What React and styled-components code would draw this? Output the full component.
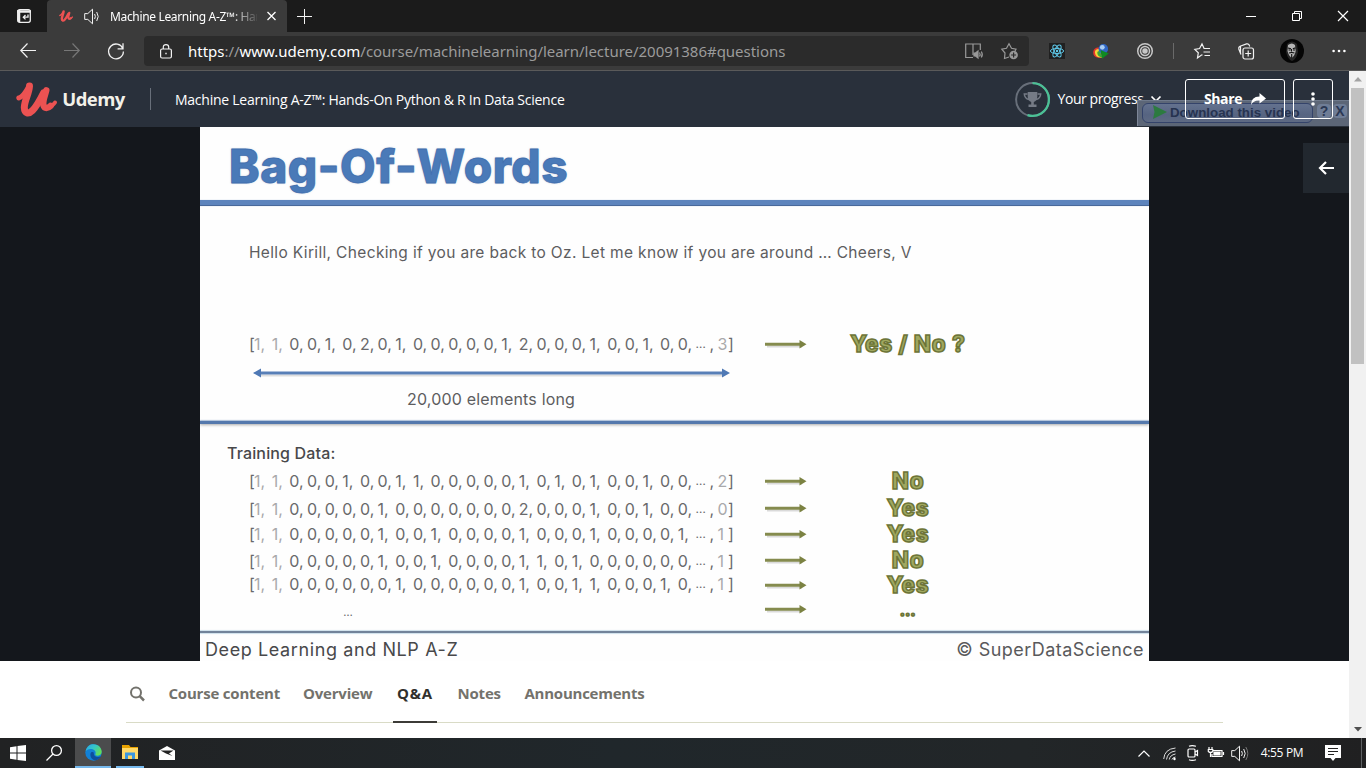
import React from "react";
import styled, { createGlobalStyle } from "styled-components";

const UI = `"Open Sans", "Noto Sans", sans-serif`;
const NOTO = `"Noto Sans", "Open Sans", sans-serif`;
const SLIDE = `Inter, Lato, sans-serif`;

const Global = createGlobalStyle`
  * { box-sizing: border-box; }
  html, body { margin: 0; padding: 0; background: #fff; overflow: hidden; }
  svg { display: block; flex: none; overflow: visible; }
`;

const Screen = styled.div`
  width: 1366px;
  height: 768px;
  display: flex;
  flex-direction: column;
  overflow: hidden;
  font-family: ${UI};
`;

const Cell = styled.div`
  width: ${(p) => p.$w}px;
  height: 100%;
  flex: none;
  display: flex;
  align-items: center;
  justify-content: center;
`;

const Label = styled.span`
  white-space: nowrap;
  flex: none;
  font-size: ${(p) => p.$size}px;
  font-weight: ${(p) => p.$weight || 400};
  letter-spacing: ${(p) => p.$track || 0}px;
  margin-bottom: ${(p) => p.$lift || 0}px;
  color: ${(p) => p.$color || "#fff"};
`;

/* ---------- browser chrome ---------- */

const TabStrip = styled.div`
  height: 32px;
  flex: none;
  display: flex;
  background: #1b1b1b;
`;

const Tab = styled.div`
  width: 240px;
  height: 32px;
  display: flex;
  align-items: center;
  padding-left: 12px;
  background: #3b3b3b;
  border-radius: 4px 4px 0 0;
`;

const TabTitle = styled.div`
  width: 147px;
  margin-left: 9px;
  overflow: hidden;
  white-space: nowrap;
  font-family: ${NOTO};
  font-size: 12px;
  letter-spacing: -0.34px;
  color: #fff;
  mask-image: linear-gradient(90deg, #000 120px, transparent 150px);
`;

const Spacer = styled.div`
  flex: 1;
`;

const Toolbar = styled.div`
  height: 39px;
  flex: none;
  display: flex;
  padding-left: 6px;
  background: #3b3b3b;
  border-bottom: 1px solid #5a5a5a;
`;

const AddressBar = styled.div`
  width: 885px;
  height: 30px;
  margin: 4px 6px 0 6px;
  display: flex;
  align-items: center;
  border-radius: 4px;
  background: #2b2b2b;
`;

const Url = styled.div`
  font-family: ${NOTO};
  font-size: 15px;
  letter-spacing: -0.025px;
  white-space: nowrap;
  color: #9b9b9b;
  b { font-weight: 400; color: #fff; }
`;

const ToolDivider = styled.div`
  width: 1px;
  height: 16px;
  background: #6a6a6a;
`;

/* ---------- page ---------- */

const Page = styled.div`
  height: 667px;
  flex: none;
  display: flex;
`;

const Content = styled.div`
  width: 1349px;
  flex: none;
  position: relative;
  background: #fff;
`;

const Header = styled.div`
  height: 56px;
  display: flex;
  align-items: center;
  padding-left: 16px;
  background: #29303b;
`;

const HeaderDivider = styled.div`
  width: 1px;
  height: 22px;
  margin: 0 24px;
  background: #686f7a;
`;

const OutlineButton = styled.div`
  width: ${(p) => p.$w}px;
  height: 40px;
  position: relative;
  z-index: 1;
  margin-left: ${(p) => p.$gap}px;
  display: flex;
  align-items: center;
  justify-content: center;
  gap: 9px;
  border: 1px solid #fff;
  border-radius: 3px;
`;

const DownloadBar = styled.div`
  position: absolute;
  left: 1137px;
  top: 29px;
  width: 212px;
  height: 26px;
  display: flex;
  align-items: flex-start;
  padding: 2px 0 0 4px;
  border-left: 1px solid #7d8698;
  border-top: 1px solid #6f7a8c;
  background: #5c6677;
`;

const DownloadButton = styled.div`
  width: 171px;
  height: 20px;
  display: flex;
  align-items: center;
  padding: 0 0 2px 10px;
  gap: 3px;
  border: 1px solid #34436a;
  border-radius: 6px;
  background: linear-gradient(#64728f, #566481 60%, #5e6a83);
  font: 700 13.3px "Liberation Sans", sans-serif;
  letter-spacing: 0.02px;
  color: #263350;
  white-space: nowrap;
`;

const MiniButton = styled.div`
  width: 14px;
  height: 14px;
  margin: 1px 0 0 ${(p) => p.$gap}px;
  display: flex;
  align-items: center;
  justify-content: center;
  border-radius: 4px;
  background: #6f7d96;
  font: 700 14px "Liberation Sans", sans-serif;
  color: #2b3854;
`;

const Stage = styled.div`
  height: 534px;
  display: flex;
  padding-left: 200px;
  background: #14171c;
`;

const Collapse = styled.div`
  width: 46px;
  height: 50px;
  margin: 16px 0 0 154px;
  display: flex;
  align-items: center;
  justify-content: center;
  background: #22282f;
`;

const Slide = styled.div`
  width: 949px;
  height: 534px;
  flex: none;
  display: flex;
  flex-direction: column;
  background: #fefefe;
  font-family: ${SLIDE};
  overflow: hidden;
`;

const SlideTitle = styled.div`
  height: 73px;
  padding-left: 29px;
  line-height: 78px;
  font-size: 46px;
  font-weight: 800;
  letter-spacing: 0.6px;
  white-space: nowrap;
  color: #4a7ab8;
  -webkit-text-stroke: 0.8px #426fae;
  text-shadow: 0 0 2px rgba(110, 135, 180, 0.7);
`;

const Rule = styled.div`
  height: ${(p) => p.$h}px;
  flex: none;
  background: ${(p) => p.$color};
  box-shadow: ${(p) => p.$shadow || "none"};
`;

const SlideSection = styled.div`
  height: ${(p) => p.$h}px;
  flex: none;
`;

const SlideText = styled.div`
  height: 22px;
  line-height: 22px;
  padding-left: ${(p) => p.$x}px;
  margin-top: ${(p) => p.$top || 0}px;
  font-size: ${(p) => p.$size}px;
  font-weight: ${(p) => p.$weight || 400};
  letter-spacing: ${(p) => p.$track}px;
  white-space: nowrap;
  color: ${(p) => p.$color || "#5d5d5f"};
`;

const DataRow = styled.div`
  height: ${(p) => p.$h || 26}px;
  margin-top: ${(p) => p.$top}px;
  padding-left: 49px;
  display: flex;
  align-items: center;
`;

const VectorBox = styled.div`
  width: 484px;
  display: flex;
  font-size: 16px;
  line-height: 26px;
  color: #69696b;
  position: relative;
  top: ${(p) => p.$dy || 0}px;
`;

const Digit = styled.span`
  width: ${(p) => p.$w || 17.66}px;
  flex: none;
  white-space: nowrap;
  font-size: ${(p) => p.$size || 16}px;
  color: ${(p) => (p.$faint ? "#a9a9ab" : "inherit")};
`;

const Ellipsis = styled.span`
  width: 198px;
  text-align: center;
  font-size: 11px;
`;

const ArrowCell = styled.div`
  width: 46px;
  margin-left: 32px;
`;

const Answer = styled.div`
  width: 194px;
  text-align: center;
  font-size: ${(p) => p.$size || 22.5}px;
  line-height: 26px;
  font-weight: 800;
  letter-spacing: 0.7px;
  color: #a0a860;
  -webkit-text-stroke: 1.5px #6c7437;
  position: relative;
  top: ${(p) => p.$dy || 0}px;
`;

const SlideFooter = styled.div`
  flex: 1;
  display: flex;
  align-items: center;
  justify-content: space-between;
  padding: 4px 5px 0 5px;
`;

const CourseNav = styled.div`
  width: 1097px;
  height: 62px;
  margin-left: 126px;
  display: flex;
  border-bottom: 1px solid #d9dbc6;
`;

const NavItem = styled.div`
  height: 62px;
  margin-left: ${(p) => p.$gap}px;
  padding-top: 21px;
  border-bottom: ${(p) => (p.$active ? "2px solid #3c3b37" : "0")};
  padding-left: ${(p) => (p.$active ? 4 : 0)}px;
  width: ${(p) => p.$w}px;
  line-height: 22px;
  font-size: 15px;
  font-weight: 700;
  letter-spacing: ${(p) => p.$track}px;
  white-space: nowrap;
  color: ${(p) => (p.$active ? "#30302d" : "#73726c")};
`;

const Scrollbar = styled.div`
  width: 17px;
  display: flex;
  flex-direction: column;
  align-items: center;
  background: #f1f1f1;
`;

const Thumb = styled.div`
  width: 13px;
  height: 276px;
  background: #c1c1c1;
`;

/* ---------- task bar ---------- */

const TaskBar = styled.div`
  height: 30px;
  flex: none;
  display: flex;
  background: linear-gradient(90deg, #212223, #20272b 45%, #222628 75%, #202021);
`;

const TaskApp = styled(Cell)`
  background: ${(p) => (p.$focused ? "#4b4c4d" : "transparent")};
  border-bottom: ${(p) => (p.$open ? "2px solid #76b9ed" : "0")};
  margin-left: ${(p) => p.$gap || 0}px;
`;

const EndLine = styled.div`
  width: 1px;
  margin-right: 4px;
  background: #5d6062;
`;

/* ---------- drawings ---------- */

const Icon = ({ w = 16, h, color = "#f2f2f2", sw = 1, children }) => (
  <svg width={w} height={h || w} viewBox={`0 0 ${w} ${h || w}`} fill="none" stroke={color} strokeWidth={sw}>
    {children}
  </svg>
);

const UdemyMark = ({ w, h }) => (
  <svg width={w} height={h} viewBox="0 0 41 35" fill="none" stroke="#ec5252" strokeLinecap="round" strokeLinejoin="round">
    <path strokeWidth="5" d="M2.800 16C6 15.500 8.500 12 12 6" />
    <path strokeWidth="7" d="M13.500 4C13 12 8.500 18 8.300 25.500C8.500 32 12.500 32.500 16.500 28.500C20.500 24.500 24 18 27.500 11" />
    <path strokeWidth="6.400" d="M30.300 8.300C29 14 26.300 19 27.500 23.500C28.500 27 32 26.500 34.500 24" />
    <path strokeWidth="4" d="M34 24.500C36.500 24 38 22 39 20.500" />
  </svg>
);

const Speaker = ({ dim }) => (
  <Icon w={17}>
    <path d="M.7 5.6h3.1L8.5 1.2v14.6L3.8 11.4H.7z" strokeLinejoin="round" />
    <path d="M10.6 6q1.5 2.5 0 5M12.700 4q3 4.500 0 9" />
    {dim ? <path d="M14.800 2q4 6.500 0 13" stroke="#777" /> : null}
  </Icon>
);

const GreenArrow = () => (
  <svg width="46" height="14" viewBox="0 0 46 14">
    <path d="M2 9.600H37" stroke="#000" strokeOpacity=".14" strokeWidth="2" />
    <path d="M0 7.300H36" stroke="#858b4e" strokeWidth="3" />
    <path d="M34.500 3L41.500 7.200L34.500 11.500Z" fill="#7b8242" />
  </svg>
);

const Atom = () => (
  <svg width="16" height="16" viewBox="0 0 16 16" fill="none" stroke="#5fc9ea">
    <path d="M0 0h16v16H0z" fill="#202020" stroke="none" />
    <ellipse cx="8" cy="8" rx="6.6" ry="2.6" />
    <ellipse cx="8" cy="8" rx="6.6" ry="2.6" transform="rotate(60 8 8)" />
    <ellipse cx="8" cy="8" rx="6.6" ry="2.6" transform="rotate(120 8 8)" />
    <circle cx="8" cy="8" r="1.2" fill="#5fc9ea" stroke="none" />
  </svg>
);

const Idm = () => (
  <svg width="16" height="15" viewBox="0 0 16 15">
    <path d="M.2 9C0 4 4 3 6.500 3.500L9 13.500C5 14.500 .8 13.500 .2 9Z" fill="#e5372c" />
    <path d="M2 9C1.500 6 4.500 4.700 7 5.200L9 13.500C5 14 2.500 12.500 2 9Z" fill="#f4d63a" />
    <path d="M4.300 9C4 7.500 6 6.700 7 7.200L9.500 13.500C6 13 4.500 11.500 4.300 9Z" fill="#3ba53b" />
    <circle cx="10.300" cy="4.900" r="4.800" fill="#2f66c4" />
    <circle cx="9.300" cy="3.300" r="2.400" fill="#a9cdf2" />
    <path d="M7.500 6L15.800 9.500L9 14.800L8.500 11Z" fill="#0f8a22" />
  </svg>
);

const Avatar = () => (
  <svg width="24" height="24" viewBox="0 0 24 24">
    <circle cx="12" cy="12" r="12" fill="#050505" />
    <path d="M7 5q5-5 10 0l1 8q-2 8-6 9q-4-1-6-9z" fill="#252525" />
    <path d="M8 6q4-3 7 0l.7 6q-1 5-4 7q-3-2-4.200-7z" fill="#b5b5b5" />
    <path d="M8 9l3 .7M12.800 9.700l2.700-.8M9 14q2.700-1 5.400 0M11.700 15v4M11.500 10v2.500M8.500 11h2M13 11h2" stroke="#111" strokeWidth="1.100" />
  </svg>
);

const Trophy = () => (
  <svg width="35" height="35" viewBox="0 0 35 35" fill="none">
    <circle cx="17.500" cy="17.500" r="16.400" stroke="#686f7a" strokeWidth="2" />
    <path d="M17.500 1.100A16.400 16.400 0 1 1 12.500 33.100" stroke="#4bc196" strokeWidth="2.200" />
    <path d="M12.700 10h9.600v5q-.3 4-3.500 5v2.500h2.700V25h-8v-2.500h2.700V20q-3.200-1-3.500-5z" fill="#757b86" />
    <path d="M12.500 12H9.300q.3 4.500 4.700 5.500M22.500 12h3.200q-.3 4.500-4.700 5.500" stroke="#757b86" strokeWidth="1.500" />
  </svg>
);

const EdgeLogo = () => (
  <svg width="17" height="17" viewBox="0 0 17 17">
    <defs>
      <linearGradient id="edgeTop" x1="0" y1="0" x2="1" y2=".6">
        <stop offset="0" stopColor="#2aa5e8" />
        <stop offset=".5" stopColor="#35c7c9" />
        <stop offset="1" stopColor="#63df57" />
      </linearGradient>
    </defs>
    <circle cx="8.500" cy="8.500" r="8.200" fill="#1180d6" />
    <path d="M.5 7.500C2 2 5 .3 8.500 .3C13.500 .3 16.700 4 16.700 7.700C16.700 10.500 14.500 11.700 12.500 11.700C10.500 11.700 10 10.700 10.500 9.700C11.400 7 8.500 5 5.500 5C3 5 1.500 6 .5 7.500Z" fill="url(#edgeTop)" />
    <path d="M5.500 9.500C4.700 13.500 8 16.700 11 16.200C13.500 15.500 15 14 16 12.300C12 14.300 8.500 12.500 8.700 8.500C7 7.500 5.800 8.200 5.500 9.500Z" fill="#0d4f9e" />
  </svg>
);

const Folder = () => (
  <svg width="16" height="14" viewBox="0 0 16 14">
    <path d="M0 0h7l1.500 2H16v4H0z" fill="#e8a200" />
    <path d="M0 3h16v11H0z" fill="#ffd968" />
    <path d="M3 14V7.500h10V14h-3v-3.500H6V14z" fill="#3b97de" />
  </svg>
);

/* ---------- content data ---------- */

const VECTORS = {
  query: ["1100102010000012000100100", "3"],
  rows: [
    { v: "1100010011000001010100100", last: "2", h: 26, dy: 0, answer: "No" },
    { v: "1100000100000002000100100", last: "0", h: 28, dy: 1, answer: "Yes" },
    { v: "1100000100100001000100001", last: "1", h: 24, dy: 0, answer: "Yes" },
    { v: "1100000100100001101000000", last: "1", h: 27, dy: 1, answer: "No" },
    { v: "1100000010000001001100010", last: "1", h: 24, dy: -1, answer: "Yes" },
  ],
};

const Vector = ({ digits, last, dy }) => (
  <VectorBox $dy={dy}>
    <Digit $w={5}>[</Digit>
    {digits.split("").map((d, i) => (
      <Digit key={i} $faint={i < 2}>{d},</Digit>
    ))}
    <Digit $w={14} $size={12}>…</Digit>
    <Digit $w={8}>,</Digit>
    <Digit $w={10.500} $faint>{last}</Digit>
    <Digit $w={4}>]</Digit>
  </VectorBox>
);

const Browser = () => (
  <>
    <TabStrip>
      <Cell $w={47}>
        <Icon w={14} color="#eee" sw={1.3}>
          <rect x=".7" y=".7" width="12.600" height="12.600" rx="2" />
          <path d="M0 2.500h14M2 1v12" strokeWidth="2.500" />
          <path d="M11 5.500v2.700H6.500M8.500 6L6.300 8.200L8.500 10.400" />
        </Icon>
      </Cell>
      <Tab>
        <UdemyMark w={14} h={12} />
        <Spacer />
        <Speaker />
        <TabTitle>Machine Learning A-Z™: Hands-On</TabTitle>
        <Cell $w={30}>
          <Icon w={8} color="#fff" sw={1.3}><path d="M-.5 0L7.500 8M7.500 0L-.5 8" /></Icon>
        </Cell>
      </Tab>
      <Cell $w={35}><Icon w={15}><path d="M7.500 0v15M0 7.500h15" /></Icon></Cell>
      <Spacer />
      <Cell $w={46}><Icon w={10} color="#fff"><path d="M0 5.500h10" /></Icon></Cell>
      <Cell $w={46}><Icon w={10} color="#fff"><path d="M.5 2.500h7v7h-7zM2.500 2.500V.5h7v7h-2" /></Icon></Cell>
      <Cell $w={46}><Icon w={10} color="#fff" sw={1.200}><path d="M0 0L10 10M10 0L0 10" /></Icon></Cell>
    </TabStrip>
    <Toolbar>
      <Cell $w={44}><Icon w={16} sw={1.200}><path d="M16 7.500H.8M7.500 .5L.8 7.500L7.500 14.500" /></Icon></Cell>
      <Cell $w={44}><Icon w={16} color="#777" sw={1.200}><path d="M0 7.500h15.200M8.500 .5L15.200 7.500L8.500 14.500" /></Icon></Cell>
      <Cell $w={44}><Icon w={16} sw={1.300}><path d="M14.800 5.500A7.400 7.400 0 1 0 15.400 8.500M15 .3v5.500H9.600" /></Icon></Cell>
      <AddressBar>
        <Cell $w={44}>
          <Icon w={12} h={15} sw={1.200}>
            <rect x=".6" y="5" width="10.800" height="9" rx="1.500" />
            <path d="M3.300 5V3q0-2.300 2.700-2.300T8.700 3v2" />
            <path d="M5.300 9.500h1.400" strokeWidth="1.500" />
          </Icon>
        </Cell>
        <Url><b>https</b>://<b>www.udemy.com</b>/course/machinelearning/learn/lecture/20091386#questions</Url>
        <Spacer />
        <Icon w={18} h={16} color="#999" sw={1.200}>
          <path d="M8 14.500H.7V1H8v11M8 1h7.300v6" />
          <path d="M9 10h1.500L13 8v7l-2.500-2H9z" fill="#999" />
          <path d="M14.500 9.500q1.300 2 0 4M16.300 8.500q2 3 0 6" />
        </Icon>
        <Cell $w={8} />
        <Cell $w={38}>
          <Icon w={18} h={17} color="#999" sw={1.200}>
            <path d="M8 14L3.500 15.500L4 10L.8 6.200L5.500 5.300L8 .8L10.500 5.300L15 6.200L14 8" />
            <circle cx="12.600" cy="12" r="4.300" fill="#999" stroke="none" />
            <path d="M12.600 9.500v5M10.100 12h5" stroke="#2b2b2b" />
          </Icon>
        </Cell>
      </AddressBar>
      <Cell $w={44}><Atom /></Cell>
      <Cell $w={43}><Idm /></Cell>
      <Cell $w={45}>
        <Icon w={16} color="#c8c8c8" sw={1.500}>
          <circle cx="8" cy="8" r="7.300" /><circle cx="8" cy="8" r="4.500" /><circle cx="8" cy="8" r="2" fill="#c8c8c8" />
        </Icon>
      </Cell>
      <Cell $w={12}><ToolDivider /></Cell>
      <Cell $w={46}>
        <Icon w={17} h={16} sw={1.200}>
          <path d="M8.500 11.800L7.500 12L3.500 15L4.300 9.800L.8 6.300L5.600 5.500L8 .8L10 5.200M9.500 5.500H16M9.500 9H16M10.500 12.500H16" />
        </Icon>
      </Cell>
      <Cell $w={42}>
        <Icon w={16} h={17} sw={1.200}>
          <rect x="5" y="5" width="10.500" height="11" rx="2" />
          <path d="M10.200 7.500v6M7.200 10.500h6M3 11.500L.8 6q-.5-2 1.200-2.700L8.500 .9q2-.5 2.700 1.200L11.700 3.500M2.500 3v7" />
        </Icon>
      </Cell>
      <Cell $w={50}><Avatar /></Cell>
      <Cell $w={43}>
        <Icon w={14} h={4} color="none"><g fill="#fff"><circle cx="1.600" cy="2" r="1.300" /><circle cx="7" cy="2" r="1.300" /><circle cx="12.400" cy="2" r="1.300" /></g></Icon>
      </Cell>
    </Toolbar>
  </>
);

const CourseHeader = () => (
  <Header>
    <UdemyMark w={41} h={35} />
    <Cell $w={4} />
    <Cell $w={65}><Label $size={18.500} $weight={700} $track={-0.600} $lift={2} $color="#f3f1e9">Udemy</Label></Cell>
    <HeaderDivider />
    <Label $size={14} $track={-0.250} $lift={0}>Machine Learning A-Z™: Hands-On Python &amp; R In Data Science</Label>
    <Spacer />
    <Trophy />
    <Cell $w={101}><Label $size={14} $track={-0.430} $lift={1}>Your progress</Label></Cell>
    <Icon w={10} h={6} color="#fff" sw={1.700}><path d="M.5 .5L5 5L9.500 .5" /></Icon>
    <OutlineButton $w={100} $gap={24}>
      <Label $size={14} $weight={700} $track={-0.350} $lift={1}>Share</Label>
      <svg width="15" height="12" viewBox="0 0 15 12"><path d="M0 12Q0 3.500 8.500 3.500V0L15 5.500L8.500 10.500V7.500Q2.500 7 0 12Z" fill="#fff" /></svg>
    </OutlineButton>
    <OutlineButton $w={40} $gap={8}>
      <svg width="4" height="14" viewBox="0 0 4 14" fill="#fff"><circle cx="2" cy="2" r="1.800" /><circle cx="2" cy="7" r="1.800" /><circle cx="2" cy="12" r="1.800" /></svg>
    </OutlineButton>
    <Cell $w={16} />
    <DownloadBar>
      <DownloadButton>
        <svg width="14" height="14" viewBox="0 0 14 14"><path d="M0 0L14 7L0 14L1.500 7Z" fill="#2c7a40" /></svg>
        Download this video
      </DownloadButton>
      <MiniButton $gap={4}>?</MiniButton>
      <MiniButton $gap={2}>X</MiniButton>
    </DownloadBar>
  </Header>
);

const Lesson = () => (
  <Slide>
    <SlideTitle>Bag-Of-Words</SlideTitle>
    <Rule $h={6} $color="#5d84bd" $shadow="inset 0 -1px #49699b, 0 0 1px #b8c9e2" />
    <SlideSection $h={215}>
      <SlideText $x={49} $top={36} $size={15.500} $track={0.345}>
        Hello Kirill, Checking if you are back to Oz. Let me know if you are around … Cheers, V
      </SlideText>
      <DataRow $top={67}>
        <Vector digits={VECTORS.query[0]} last={VECTORS.query[1]} />
        <ArrowCell><GreenArrow /></ArrowCell>
        <Answer>Yes / No ?</Answer>
      </DataRow>
      <SlideSection $h={31}>
        <svg width="532" height="31" viewBox="0 0 532 31">
          <path d="M60 18.500H524" stroke="#000" strokeOpacity=".13" strokeWidth="2" />
          <path d="M60 16H524" stroke="#587fb7" strokeWidth="2.800" />
          <path d="M53 16L61 11.500V20.500ZM530 16L522 11.500V20.500Z" fill="#4f79b5" />
        </svg>
      </SlideSection>
      <SlideText $x={207} $size={16} $track={0.180}>20,000 elements long</SlideText>
    </SlideSection>
    <Rule $h={3} $color="#5579ad" $shadow="0 1px 3px rgba(0,0,0,.35), 0 -1px 1px #b9cce6" />
    <SlideSection $h={207}>
      <SlideText $x={27} $top={18} $size={16} $weight={500} $track={0.150} $color="#48484a">Training Data:</SlideText>
      <SlideSection $h={4} />
      {VECTORS.rows.map((r, i) => (
        <DataRow key={i} $h={r.h} $top={0}>
          <Vector digits={r.v} last={r.last} dy={r.dy} />
          <ArrowCell><GreenArrow /></ArrowCell>
          <Answer>{r.answer}</Answer>
        </DataRow>
      ))}
      <DataRow $h={24} $top={0}>
        <VectorBox $dy={3}><Ellipsis>…</Ellipsis></VectorBox>
        <ArrowCell><GreenArrow /></ArrowCell>
        <Answer $size={15} $dy={2}>…</Answer>
      </DataRow>
    </SlideSection>
    <Rule $h={2} $color="#72839a" $shadow="0 0 1px 1px #cfe0ec" />
    <SlideFooter>
      <Label $size={18} $track={0.600} $color="#48484a">Deep Learning and NLP A-Z</Label>
      <Label $size={18} $track={0.450} $color="#59595b">© SuperDataScience</Label>
    </SlideFooter>
  </Slide>
);

export default function App() {
  return (
    <Screen>
      <Global />
      <Browser />
      <Page>
        <Content>
          <CourseHeader />
          <Stage>
            <Lesson />
            <Collapse>
              <Icon w={16} h={14} color="#fff" sw={2.200}><path d="M16 7H2M8 1L2 7L8 13" /></Icon>
            </Collapse>
          </Stage>
          <CourseNav>
            <NavItem $gap={4} $w={38.500}>
              <Icon w={15} h={22} color="#73726c" sw={2}>
                <circle cx="6" cy="10.500" r="5" /><path d="M9.700 14.200L14 18.500" strokeWidth="2.500" />
              </Icon>
            </NavItem>
            <NavItem $gap={0} $w={134.500} $track={-0.200}>Course content</NavItem>
            <NavItem $gap={0} $w={90} $track={-0.200}>Overview</NavItem>
            <NavItem $gap={0} $w={44} $track={0.800} $active>Q&amp;A</NavItem>
            <NavItem $gap={20.500} $w={67} $track={-0.200}>Notes</NavItem>
            <NavItem $gap={0} $w={130} $track={-0.240}>Announcements</NavItem>
          </CourseNav>
        </Content>
        <Scrollbar>
          <svg width="8" height="17" viewBox="0 0 8 17"><path d="M0 10.500L4 6L8 10.500Z" fill="#a3a3a3" /></svg>
          <Thumb />
          <Spacer />
          <svg width="8" height="17" viewBox="0 0 8 17"><path d="M0 6L4 10.500L8 6Z" fill="#505050" /></svg>
        </Scrollbar>
      </Page>
      <TaskBar>
        <TaskApp $w={36}>
          <svg width="16" height="16" viewBox="0 0 16 16" fill="#fff"><path d="M0 2.200L6.500 1.300V7.500H0zM7.500 1.100L16 0V7.500H7.500zM0 8.500H6.500V14.700L0 13.800zM7.500 8.500H16V16L7.500 14.900z" /></svg>
        </TaskApp>
        <TaskApp $w={36}>
          <Icon w={16} h={16} color="#fff" sw={1.300}><circle cx="10.500" cy="5.500" r="4.900" /><path d="M7 9L.5 15.500" /></Icon>
        </TaskApp>
        <TaskApp $w={36} $gap={3} $focused $open><EdgeLogo /></TaskApp>
        <TaskApp $w={28} $gap={5} $open><Folder /></TaskApp>
        <TaskApp $w={46}>
          <svg width="16" height="14" viewBox="0 0 16 14"><path d="M0 4.500L8 0L16 4.500V14H0Z" fill="#fff" /><path d="M1.500 4.500H14.500L10 7.500L13.500 10L7 7.500Z" fill="#222" /></svg>
        </TaskApp>
        <Spacer />
        <Cell $w={26}><Icon w={12} h={7} color="#fff" sw={1.200}><path d="M.5 6.500L6 1L11.500 6.500" /></Icon></Cell>
        <Cell $w={24}>
          <Icon w={13} h={13} color="#ddd"><path d="M.7 12Q1.500 2 12.500 1M3.500 12.500Q4.500 5 12.500 4M6.300 12.500Q7 8 12.500 7M9 12.500Q9.500 10.500 12.500 10" /><circle cx="11.500" cy="12" r="1.200" fill="#fff" stroke="none" /></Icon>
        </Cell>
        <Cell $w={23}>
          <Icon w={12} h={16} color="#fff" sw={1.200}><rect x="1" y="4" width="7" height="8" rx="1" /><path d="M8 7l2.500-1.500v5L8 9M2 1.200Q5 0 9 1.200M2 14.800Q5 16 9 14.800" /></Icon>
        </Cell>
        <Cell $w={24}>
          <Icon w={16} h={12} color="#fff" sw={1.200}><path d="M5 3.500h9v6H4V7M15.500 5v3M1 0v2.500M4 0v2.500M.3 2.500h4.500v2q-2.200 2-4.500 0zM2.500 6v4" /><path d="M6 5h6v3H6z" fill="#fff" /></Icon>
        </Cell>
        <Cell $w={22}><Speaker dim /></Cell>
        <Cell $w={64}><Label $size={12} $track={-0.350} $lift={1}>4:55 PM</Label></Cell>
        <Cell $w={38}>
          <svg width="16" height="16" viewBox="0 0 16 16"><path d="M0 0H16V13H10.500L8 16L5.500 13H0Z" fill="#fff" /><path d="M3 3.500H13M3 6.500H13M3 9.500H9" stroke="#222" /></svg>
        </Cell>
        <Cell $w={9} />
        <EndLine />
      </TaskBar>
    </Screen>
  );
}
